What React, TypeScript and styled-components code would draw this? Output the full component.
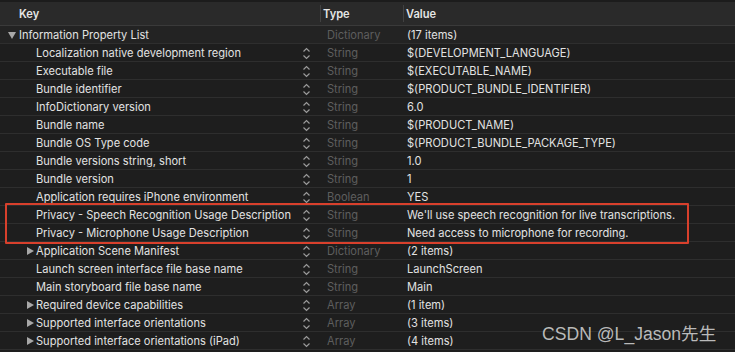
import React from 'react';
import styled, { createGlobalStyle } from 'styled-components';

const GlobalStyle = createGlobalStyle`
  html, body {
    margin: 0;
    padding: 0;
    background: #1e1e1e;
  }

  body {
    font-family: Inter, "Liberation Sans", sans-serif;
    -webkit-font-smoothing: antialiased;
  }
`;

const StyledEditor = styled.div`
  position: relative;
  width: 735px;
  height: 352px;
  overflow: hidden;
  background: #1e1e1e;
  color: #e2e2e2;
  font-size: 11.1px;
`;

const StyledHeader = styled.div`
  display: flex;
  align-items: center;
  height: 23px;
  background: #2a2a2a;
  border-top: 2px solid #1c1c1c;
  border-bottom: 1px solid #3a3a3a;
  font-weight: 600;
  color: #e6e6e6;
`;

const StyledHeaderCell = styled.div<{ $width?: number; $pad: number; $divider?: boolean }>`
  display: flex;
  align-items: center;
  height: 17px;
  width: ${(p) => (p.$width ? `${p.$width}px` : 'auto')};
  flex: ${(p) => (p.$width ? 'none' : '1')};
  padding-left: ${(p) => p.$pad}px;
  box-sizing: border-box;
  border-left: ${(p) => (p.$divider ? '1px solid #424242' : 'none')};
`;

const StyledRow = styled.div<{ $root?: boolean }>`
  display: flex;
  height: 18px;
  align-items: center;
  background: ${(p) => (p.$root ? '#232323' : 'transparent')};
  border-bottom: 1px solid #2e2e2e;
  box-sizing: border-box;
  padding-top: 1px;
`;

const StyledKeyCell = styled.div<{ $level: number }>`
  display: flex;
  align-items: center;
  width: 320px;
  flex: none;
  padding-left: ${(p) => (p.$level === 0 ? 8 : 26)}px;
  padding-right: 9px;
  box-sizing: border-box;
  white-space: nowrap;
`;

const StyledDisclosure = styled.span<{ $open?: boolean }>`
  display: inline-block;
  flex: none;
  width: 0;
  height: 0;
  border-style: solid;
  ${(p) =>
    p.$open
      ? 'border-width: 7px 4px 0 4px; border-color: #a8a8a8 transparent transparent transparent; margin-right: 3px;'
      : 'border-width: 4px 0 4px 7px; border-color: transparent transparent transparent #a8a8a8; margin-left: 1px; margin-right: 2px;'}
`;

const StyledSpacer = styled.span`
  display: inline-block;
  flex: none;
  width: 10px;
`;

const StyledKeyText = styled.span`
  flex: 1;
`;

const StyledStepper = styled.svg`
  flex: none;
  width: 9px;
  height: 13px;
`;

const StyledTypeCell = styled.div`
  width: 83px;
  flex: none;
  padding-left: 7px;
  box-sizing: border-box;
  color: #5e5e5e;
`;

const StyledValueCell = styled.div`
  flex: 1;
  padding-left: 4px;
  white-space: nowrap;
`;

const StyledHighlight = styled.div`
  position: absolute;
  left: 5px;
  top: 203px;
  width: 684px;
  height: 41px;
  border: 2px solid #d8402c;
  border-radius: 1px;
  box-sizing: border-box;
  pointer-events: none;
`;

const StyledWatermark = styled.div`
  position: absolute;
  left: 542px;
  top: 320px;
  font-family: "Liberation Sans", "Noto Sans CJK SC", sans-serif;
  font-size: 17.6px;
  color: rgba(215, 215, 215, 0.85);
  white-space: nowrap;
`;

type Row = {
  key: string;
  type: string;
  value: string;
  level: number;
  expandable?: boolean;
  open?: boolean;
};

const rows: Row[] = [
  { key: 'Information Property List', type: 'Dictionary', value: '(17 items)', level: 0, expandable: true, open: true },
  { key: 'Localization native development region', type: 'String', value: '$(DEVELOPMENT_LANGUAGE)', level: 1 },
  { key: 'Executable file', type: 'String', value: '$(EXECUTABLE_NAME)', level: 1 },
  { key: 'Bundle identifier', type: 'String', value: '$(PRODUCT_BUNDLE_IDENTIFIER)', level: 1 },
  { key: 'InfoDictionary version', type: 'String', value: '6.0', level: 1 },
  { key: 'Bundle name', type: 'String', value: '$(PRODUCT_NAME)', level: 1 },
  { key: 'Bundle OS Type code', type: 'String', value: '$(PRODUCT_BUNDLE_PACKAGE_TYPE)', level: 1 },
  { key: 'Bundle versions string, short', type: 'String', value: '1.0', level: 1 },
  { key: 'Bundle version', type: 'String', value: '1', level: 1 },
  { key: 'Application requires iPhone environment', type: 'Boolean', value: 'YES', level: 1 },
  { key: 'Privacy - Speech Recognition Usage Description', type: 'String', value: "We'll use speech recognition for live transcriptions.", level: 1 },
  { key: 'Privacy - Microphone Usage Description', type: 'String', value: 'Need access to microphone for recording.', level: 1 },
  { key: 'Application Scene Manifest', type: 'Dictionary', value: '(2 items)', level: 1, expandable: true },
  { key: 'Launch screen interface file base name', type: 'String', value: 'LaunchScreen', level: 1 },
  { key: 'Main storyboard file base name', type: 'String', value: 'Main', level: 1 },
  { key: 'Required device capabilities', type: 'Array', value: '(1 item)', level: 1, expandable: true },
  { key: 'Supported interface orientations', type: 'Array', value: '(3 items)', level: 1, expandable: true },
  { key: 'Supported interface orientations (iPad)', type: 'Array', value: '(4 items)', level: 1, expandable: true },
];

const Stepper: React.FC = () => (
  <StyledStepper viewBox="0 0 9 13">
    <path d="M1.5 4.5 L4.5 1.5 L7.5 4.5" fill="none" stroke="#9a9a9a" strokeWidth="1.2" />
    <path d="M1.5 8.5 L4.5 11.5 L7.5 8.5" fill="none" stroke="#9a9a9a" strokeWidth="1.2" />
  </StyledStepper>
);

const App: React.FunctionComponent = () => {
  return (
    <>
      <GlobalStyle />
      <StyledEditor>
        <StyledHeader>
          <StyledHeaderCell $width={320} $pad={19}>Key</StyledHeaderCell>
          <StyledHeaderCell $width={83} $pad={2} $divider>Type</StyledHeaderCell>
          <StyledHeaderCell $pad={2} $divider>Value</StyledHeaderCell>
        </StyledHeader>
        {rows.map((row) => (
          <StyledRow key={row.key} $root={row.level === 0}>
            <StyledKeyCell $level={row.level}>
              {row.expandable ? <StyledDisclosure $open={row.open} /> : <StyledSpacer />}
              <StyledKeyText>{row.key}</StyledKeyText>
              {row.level > 0 && <Stepper />}
            </StyledKeyCell>
            <StyledTypeCell>{row.type}</StyledTypeCell>
            <StyledValueCell>{row.value}</StyledValueCell>
          </StyledRow>
        ))}
        <StyledHighlight />
        <StyledWatermark>CSDN @L_Jason先生</StyledWatermark>
      </StyledEditor>
    </>
  );
};

export default App;
